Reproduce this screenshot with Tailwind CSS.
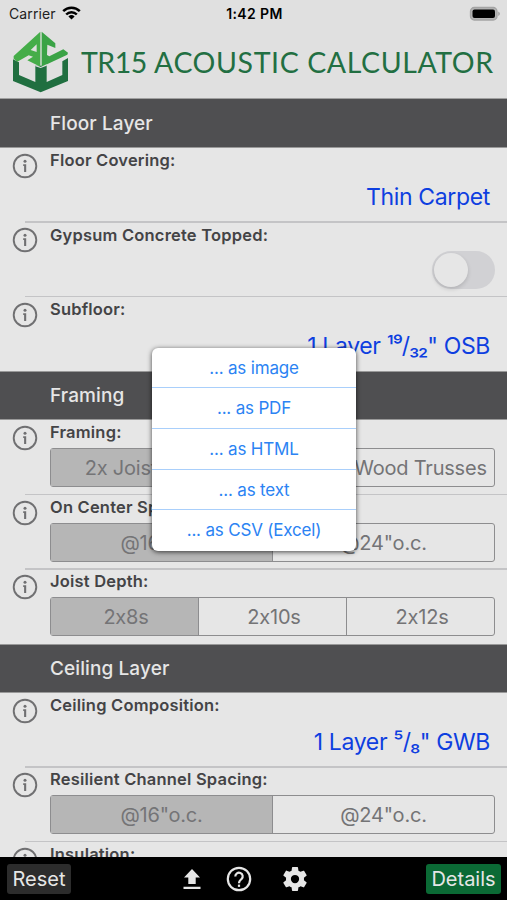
<!DOCTYPE html>
<html lang="en">
<head>
<meta charset="utf-8">
<title>TR15 Acoustic Calculator</title>
<script src="https://cdn.jsdelivr.net/npm/@tailwindcss/browser@4"></script>
</head>
<body class="w-[507px] h-[900px] overflow-hidden bg-[#e6e6e6] font-['Inter','Liberation_Sans',sans-serif] [font-feature-settings:'calt'_0] text-[#444446]">
<svg class="hidden">
  <symbol id="info" viewBox="0 0 26 26"><circle cx="13" cy="13" r="11.3" fill="none" stroke="#707072" stroke-width="1.9"/><circle cx="13" cy="8.3" r="1.5" fill="#707072"/><path d="M11.2 11.2h3v7.8h-2.1v-6.1h-.9z" fill="#707072"/></symbol>
</svg>
<div class="relative w-[507px] h-[900px] overflow-hidden flex flex-col">
  <header class="h-[98.5px] shrink-0 bg-[#e0e0e0] border-b border-[#a0a0a0]">
    <div class="h-7 pl-[9px] pr-[6px] grid grid-cols-3 items-center text-black">
      <div class="flex items-center gap-[6px] text-[14px] text-[#222] -mt-[2px]"><span class="tracking-[0.1px]">Carrier</span>
        <svg class="w-[19px] h-[14px]" viewBox="0 0 19 14" fill="none" stroke="#000" stroke-width="2.5"><path d="M1.2 5.2a11.7 11.7 0 0 1 16.6 0M4.2 8.5a7.4 7.4 0 0 1 10.6 0"/><path d="M9.5 13.6L6.4 10.500a4.500 4.500 0 0 1 6.200 0z" fill="#000" stroke="none"/></svg>
      </div>
      <div class="text-center text-[14px] font-semibold tracking-[0.4px] whitespace-nowrap -mt-px -ml-[1px]">1:42 PM</div>
      <svg class="justify-self-end w-[32px] h-[16px] -mt-px" viewBox="0 0 32 16"><rect x="1.500" y="1.500" width="26.500" height="12.500" rx="3.800" fill="#b4b4b4" stroke="#a4a4a4" stroke-width="1.300"/><rect x="3.500" y="3.400" width="22.500" height="8.700" rx="2" fill="#000"/><path d="M29.300 5.500q3 2.200 0 4.500z" fill="#999"/></svg>
    </div>
    <div class="h-[70px] pl-[8px] flex items-center">
      <svg class="w-[66px] h-[72px] shrink-0 -mt-[2px]" viewBox="0 0 198 216">
        <path fill="#206f40" fill-rule="evenodd" d="M15 100L33 109V147L82 168V118L98 119L116 118V168L163 147V106L180 96V165L98 199L15 165z"/>
        <path fill="#45ad49" fill-rule="evenodd" d="M97 17L17 90V98L28 107L62 88L75 92L58 103L97 122zM86 55V78L68 72z"/>
        <path fill="#3aa346" d="M101 17L142 52V66L118 56L117 87L124 91L166 70L180 80L178 86L101 122z"/>
        <path fill="#e0e0e0" d="M82 116L98 123L116 115V119L98 126L82 121z"/>
      </svg>
      <h1 class="ml-[7px] mt-[-2px] text-[28.5px] leading-none text-[#226f42] font-['Lato',sans-serif] whitespace-nowrap tracking-[0.6px]"><span class="tracking-[-0.5px]">TR15</span><span class="text-[26px]"> </span>ACOUSTIC CALCULATOR</h1>
    </div>
  </header>

  <main class="h-[758.500px] shrink-0 overflow-hidden">
    <section>
      <h2 class="h-[49px] bg-[#4f4f51] border-b border-[#999] pl-[50px] pt-[3px] flex items-center text-[19px] font-medium text-[#e6e6e6] tracking-[0.1px]">Floor Layer</h2>
      <div class="h-[74.500px] flex">
        <svg class="ml-3 mt-[5px] w-[26px] h-[26px] shrink-0"><use href="#info"/></svg>
        <div class="ml-3 flex-1 pr-[17px]"><div class="h-[26px] leading-[25px] text-[16.500px] font-semibold tracking-[0.200px]">Floor Covering:</div><div class="h-[46px] leading-[47px] text-right text-[23px] text-[#0e3fe0] tracking-[-0.350px]">Thin Carpet</div></div>
      </div>
      <div class="h-[74.500px] flex relative before:absolute before:left-[25px] before:right-0 before:-top-[1px] before:h-[1.500px] before:bg-[#c4c4c6]">
        <svg class="ml-3 mt-[5px] w-[26px] h-[26px] shrink-0"><use href="#info"/></svg>
        <div class="ml-3 flex-1 pr-[12px]"><div class="h-[26px] leading-[26px] text-[16.500px] font-semibold tracking-[0.200px]">Gypsum Concrete Topped:</div>
          <div class="ml-auto mt-[3px] w-[63px] h-[38px] rounded-full bg-[#d1d1d4] p-[2px]"><div class="w-[34px] h-[34px] rounded-full bg-[#e6e6e6] shadow-[0_2px_4px_rgba(0,0,0,0.15)]"></div></div></div>
      </div>
      <div class="h-[74.500px] flex relative before:absolute before:left-[25px] before:right-0 before:-top-[1px] before:h-[1.500px] before:bg-[#c4c4c6]">
        <svg class="ml-3 mt-[5px] w-[26px] h-[26px] shrink-0"><use href="#info"/></svg>
        <div class="ml-3 flex-1 pr-[17px]"><div class="h-[26px] leading-[25px] text-[16.500px] font-semibold tracking-[0.200px]">Subfloor:</div><div class="h-[46px] leading-[47px] text-right text-[23px] text-[#0e3fe0] tracking-[-0.350px]">1 Layer <span class="tracking-[-1.100px]">¹⁹/₃₂</span>" OSB</div></div>
      </div>
    </section>
    <section>
      <h2 class="h-[49px] bg-[#4f4f51] border-y border-[#999] pl-[50px] pt-[2px] flex items-center text-[19px] font-medium text-[#e6e6e6] tracking-[0.1px]">Framing</h2>
      <div class="h-[74.500px] flex">
        <svg class="ml-3 mt-[5px] w-[26px] h-[26px] shrink-0"><use href="#info"/></svg>
        <div class="ml-3 flex-1 pr-[12px]"><div class="h-[28px] leading-[25px] text-[16.500px] font-semibold tracking-[0.200px]">Framing:</div>
          <div class="h-[39px] border-[1.500px] border-[#8d8d8f] rounded-[3px] flex text-[20px] text-[#747476] tracking-[-0.200px] leading-[38px] text-center"><div class="w-[148px] pl-[2px] bg-[#b6b6b6]">2x Joists</div><div class="w-[148px] border-x border-[#8d8d8f]"></div><div class="flex-1 whitespace-nowrap">Wood Trusses</div></div></div>
      </div>
      <div class="h-[74.500px] flex relative before:absolute before:left-[25px] before:right-0 before:-top-[1px] before:h-[1.500px] before:bg-[#c4c4c6]">
        <svg class="ml-3 mt-[5px] w-[26px] h-[26px] shrink-0"><use href="#info"/></svg>
        <div class="ml-3 flex-1 pr-[12px]"><div class="h-[28px] leading-[25px] text-[16.500px] font-semibold tracking-[0.200px]">On Center Spacing:</div>
          <div class="h-[39px] border-[1.500px] border-[#8d8d8f] rounded-[3px] flex text-[20px] text-[#747476] tracking-[-0.200px] leading-[38px] text-center"><div class="flex-1 bg-[#b6b6b6] border-r border-[#8d8d8f]">@16"o.c.</div><div class="flex-1">@24"o.c.</div></div></div>
      </div>
      <div class="h-[74.500px] flex relative before:absolute before:left-[25px] before:right-0 before:-top-[1px] before:h-[1.500px] before:bg-[#c4c4c6]">
        <svg class="ml-3 mt-[5px] w-[26px] h-[26px] shrink-0"><use href="#info"/></svg>
        <div class="ml-3 flex-1 pr-[12px]"><div class="h-[28px] leading-[25px] text-[16.500px] font-semibold tracking-[0.200px]">Joist Depth:</div>
          <div class="h-[39px] border-[1.500px] border-[#8d8d8f] rounded-[3px] flex text-[20px] text-[#747476] tracking-[-0.200px] leading-[38px] text-center"><div class="flex-1 pl-[3px] bg-[#b6b6b6]">2x8s</div><div class="flex-1 pl-[3px] border-x border-[#8d8d8f]">2x10s</div><div class="flex-1 pl-[3px]">2x12s</div></div></div>
      </div>
    </section>
    <section>
      <h2 class="h-[49px] bg-[#4f4f51] border-y border-[#999] pl-[50px] pt-[2px] flex items-center text-[19px] font-medium text-[#e6e6e6] tracking-[0.1px]">Ceiling Layer</h2>
      <div class="h-[74.500px] flex">
        <svg class="ml-3 mt-[5px] w-[26px] h-[26px] shrink-0"><use href="#info"/></svg>
        <div class="ml-3 flex-1 pr-[17px]"><div class="h-[26px] leading-[25px] text-[16.500px] font-semibold tracking-[0.200px]">Ceiling Composition:</div><div class="h-[46px] leading-[47px] text-right text-[23px] text-[#0e3fe0] tracking-[-0.350px]">1 Layer <span class="tracking-[-0.800px]">⁵/₈</span>" GWB</div></div>
      </div>
      <div class="h-[74.500px] flex relative before:absolute before:left-[25px] before:right-0 before:-top-[1px] before:h-[1.500px] before:bg-[#c4c4c6]">
        <svg class="ml-3 mt-[5px] w-[26px] h-[26px] shrink-0"><use href="#info"/></svg>
        <div class="ml-3 flex-1 pr-[12px]"><div class="h-[28px] leading-[25px] text-[16.500px] font-semibold tracking-[0.200px]">Resilient Channel Spacing:</div>
          <div class="h-[39px] border-[1.500px] border-[#8d8d8f] rounded-[3px] flex text-[20px] text-[#747476] tracking-[-0.200px] leading-[38px] text-center"><div class="flex-1 bg-[#b6b6b6] border-r border-[#8d8d8f]">@16"o.c.</div><div class="flex-1">@24"o.c.</div></div></div>
      </div>
      <div class="h-[74.500px] flex relative before:absolute before:left-[25px] before:right-0 before:-top-[1px] before:h-[1.500px] before:bg-[#c4c4c6]">
        <svg class="ml-3 mt-[5px] w-[26px] h-[26px] shrink-0"><use href="#info"/></svg>
        <div class="ml-3 leading-[25px] text-[16.500px] font-semibold tracking-[0.200px]">Insulation:</div>
      </div>
    </section>
  </main>

  <footer class="flex-1 bg-black flex items-center pl-[7px] pr-[6px] text-[20px]">
    <button class="w-[64px] h-[30px] rounded-[3px] bg-[#2c2c2c] text-[#e6e6e6] leading-[30px]">Reset</button>
    <svg class="ml-[111px] w-[20px] h-[22px]" viewBox="0 0 20 22" fill="#e6e6e6"><path d="M10 1L18 9.500h-4.300V16H6.300V9.500H2zM1.500 18.800h17v2.200h-17z"/></svg>
    <svg class="ml-[24px] w-[26px] h-[26px]" viewBox="0 0 26 26" fill="none" stroke="#e6e6e6" stroke-width="2.200"><circle cx="13" cy="13" r="11.200"/><path d="M9.300 10.400a3.700 3.700 0 1 1 6.300 2.600c-1.500 1.500-2.600 1.900-2.600 4.200"/><path d="M13 18.600v2.300"/></svg>
    <svg class="ml-[28px] w-[30px] h-[30px]" viewBox="0 0 24 24" fill="#e6e6e6"><path d="M19.140 12.940c.04-.3.060-.61.060-.94 0-.32-.02-.64-.07-.94l2.030-1.580c.18-.14.23-.41.120-.61l-1.920-3.320c-.12-.22-.37-.29-.59-.22l-2.390.96c-.5-.38-1.030-.7-1.620-.94l-.36-2.540c-.04-.24-.24-.41-.48-.41h-3.840c-.24 0-.43.17-.47.41l-.36 2.540c-.59.24-1.130.57-1.620.94l-2.390-.96c-.22-.08-.47 0-.59.22L2.740 8.870c-.12.21-.08.47.12.61l2.030 1.580c-.05.3-.09.63-.09.94s.02.64.07.94l-2.030 1.580c-.18.14-.23.41-.12.610l1.920 3.320c.12.22.37.29.59.22l2.390-.96c.5.38 1.030.7 1.620.94l.36 2.540c.05.24.24.41.48.41h3.840c.24 0 .44-.17.47-.41l.36-2.540c.59-.24 1.130-.56 1.620-.94l2.390.96c.22.08.47 0 .59-.22l1.920-3.320c.12-.22.07-.47-.12-.61zM12 15.300a3.300 3.300 0 1 1 0-6.600 3.300 3.300 0 0 1 0 6.600z"/></svg>
    <button class="ml-auto w-[75px] h-[30px] rounded-[3px] bg-[#0b6a35] text-[#e6e6e6] leading-[30px]">Details</button>
  </footer>

  <div class="absolute left-[152px] top-[347.500px] w-[204px] h-[203.500px] rounded-[6px] bg-white shadow-[0_1px_5px_rgba(0,0,0,0.7)] grid grid-rows-5 divide-y divide-[#a9cffb] text-center text-[17px] tracking-[-0.180px] leading-[41px] text-[#2b83f3]">
    <div>... as image</div><div>... as PDF</div><div>... as HTML</div><div>... as text</div><div>... as CSV (Excel)</div>
  </div>
</div>
</body>
</html>
